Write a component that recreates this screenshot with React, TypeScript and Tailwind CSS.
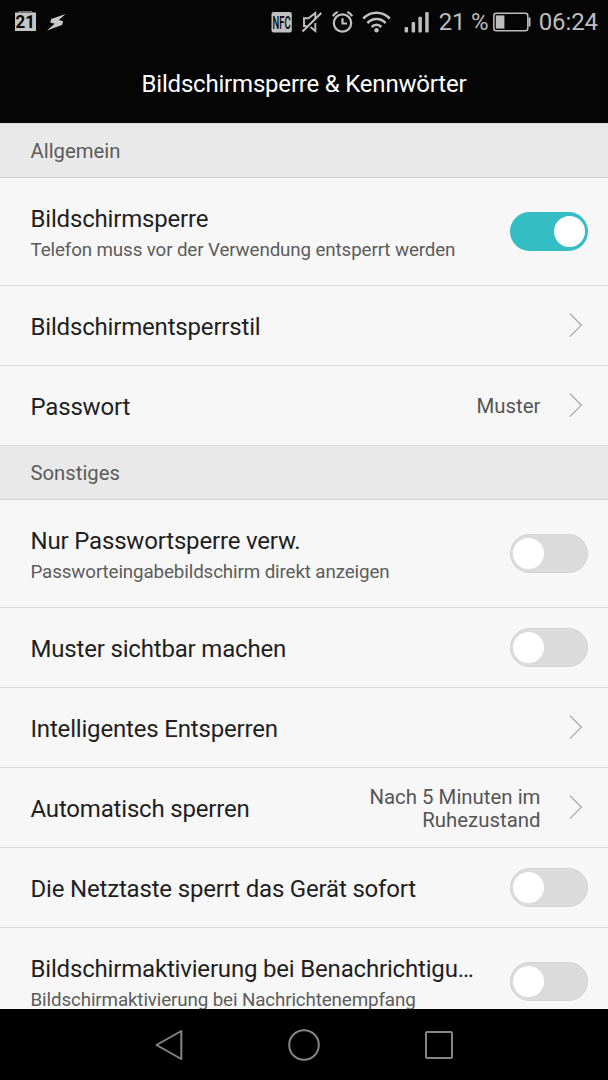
import type { ReactNode } from 'react'

interface RowProps {
  title: string
  subtitle?: string
  value?: ReactNode
  toggle?: boolean
}

function Toggle({ on }: { on: boolean }) {
  return (
    <span
      role="switch"
      aria-checked={on}
      className={
        on
          ? 'flex h-[39px] w-[78px] shrink-0 items-center justify-end rounded-full bg-[#34bec4] pr-[3px]'
          : 'flex h-[39px] w-[78px] shrink-0 items-center rounded-full border border-[#d2d2d2] bg-[#dbdbdb] pl-[2px]'
      }
    >
      <span className="size-[31px] rounded-full bg-white" />
    </span>
  )
}

function Chevron() {
  return (
    <svg width="14" height="26" viewBox="0 0 14 26" fill="none" className="mr-[5px] ml-[28.5px] shrink-0">
      <path d="M.9 .6 12.3 12.1 .9 23.6" stroke="#a3a3a3" strokeWidth="1.2" />
    </svg>
  )
}

function Section({ children }: { children: string }) {
  return (
    <h2 className="flex h-[54px] shrink-0 items-center border-b border-[#d0d0d0] bg-[#e9e9e9] pt-px pl-[30.5px] text-[20.3px] text-[#5c5c5c]">
      {children}
    </h2>
  )
}

function Row({ title, subtitle, value, toggle }: RowProps) {
  return (
    <div
      className={`flex shrink-0 items-center border-b border-[#dcdcdc] pr-[20px] pl-[30.5px] ${subtitle ? 'h-[108px]' : 'h-[80px]'}`}
    >
      <div className={`min-w-0 grow ${subtitle ? 'pt-[2px]' : 'pt-[3px]'}`}>
        <div className="text-[24px] leading-[34px] tracking-[-0.18px] whitespace-nowrap text-[#1f1f1f]">{title}</div>
        {subtitle && (
          <div className="text-[18.8px] leading-[28px] tracking-[-0.13px] whitespace-nowrap text-[#5c5c5c]">
            {subtitle}
          </div>
        )}
      </div>
      {value && (
        <div className="shrink-0 pt-[2px] text-right text-[20.4px] leading-[23px] text-[#555555]">{value}</div>
      )}
      {toggle === undefined ? <Chevron /> : <Toggle on={toggle} />}
    </div>
  )
}

function StatusBar() {
  return (
    <div className="flex h-[44px] items-center pr-[10px] pl-[15px] text-[24px] text-[#bdbdbd]">
      {/* Calendar notification */}
      <svg width="21" height="22" viewBox="0 0 21 22">
        <path d="M4 2V.7h13V2" fill="none" stroke="#8a8a8a" />
        <path d="M0 1.5h21V20H0z" fill="#c4c4c4" />
        <text x="0.6" y="17" fontSize="17.5" fontWeight="700" textLength="19.4" lengthAdjust="spacingAndGlyphs" fill="#050505">
          21
        </text>
      </svg>
      <svg width="19" height="17" viewBox="0 0 19 17" className="ml-[11px]">
        <path d="M18.6 0 4.2 5 3.2 8.4 7.6 9.8 0 16.6 15 10.9 16.2 7.3 11.8 6z" fill="#c9c9c9" />
      </svg>

      <div className="grow" />

      <svg width="21" height="21" viewBox="0 0 21 21">
        <rect x=".5" width="20.3" height="20.6" rx="2" fill="#c0c0c0" />
        <text x="1.6" y="16.8" fontSize="18.5" fontWeight="500" textLength="18" lengthAdjust="spacingAndGlyphs" fill="#050505">
          NFC
        </text>
      </svg>
      {/* Muted speaker */}
      <svg width="21" height="22" viewBox="0 0 21 22" fill="none" stroke="#c0c0c0" strokeWidth="1.9" className="ml-[9px]">
        <path d="M5.5 15H3V7.2H7.5L14.3 2v6M14.3 12v8L9.5 16" />
        <path d="M20.3 2 1.5 20.5" strokeWidth="2.1" />
      </svg>
      <svg width="21" height="22" viewBox="0 0 21 22" fill="none" stroke="#c0c0c0" strokeWidth="2.2" className="ml-[10px]">
        <circle cx="10.5" cy="12" r="8.7" />
        <path d="M10.5 7.2v5.3h4.6M.8 5.2Q2.5 2.2 5.7 1M20.2 5.2Q18.5 2.2 15.3 1" />
      </svg>
      <svg width="29" height="22" viewBox="0 0 29 22" fill="none" stroke="#c0c0c0" strokeWidth="2.6" className="ml-[9px]">
        <path d="M1.2 7.5Q7 1.7 14.5 1.7T27.8 7.5M5.4 12Q9.3 8 14.5 8t9.1 4M9.6 16q2.1-2.2 4.9-2.2t4.9 2.2" />
        <circle cx="14.5" cy="19.3" r="2.2" fill="#c0c0c0" stroke="none" />
      </svg>
      <svg width="25" height="21" viewBox="0 0 25 21" fill="#bdbdbd" className="ml-[13px]">
        <rect x=".6" y="15" width="3.5" height="5.5" rx="1" />
        <rect x="7.6" y="10" width="3.5" height="10.5" rx="1" />
        <rect x="14.4" y="4.7" width="3.5" height="15.8" rx="1" />
        <rect x="21.2" width="3.5" height="20.5" rx="1" />
      </svg>
      <span className="ml-[10px] w-[54px] tracking-[-0.2px] whitespace-nowrap">21 %</span>
      <svg width="38" height="20" viewBox="0 0 38 20" fill="none">
        <rect x=".8" y="1.3" width="34" height="17.4" rx="2.5" stroke="#bdbdbd" strokeWidth="1.5" />
        <path d="M2.8 3.4h8.6v13.2H2.8z" fill="#bdbdbd" />
        <path d="M36.5 5.5v9" stroke="#bdbdbd" strokeWidth="2" />
      </svg>
      <span className="ml-[8px] tracking-[-0.1px]">06:24</span>
    </div>
  )
}

export default function App() {
  return (
    <div className="flex h-[1080px] w-[608px] flex-col overflow-hidden bg-[#f7f7f7] font-['Roboto',sans-serif]">
      <header className="h-[123px] shrink-0 bg-[#050505]">
        <StatusBar />
        <h1 className="text-center text-[24px] leading-[80px] tracking-[-0.2px] text-white">
          Bildschirmsperre &amp; Kennwörter
        </h1>
      </header>

      <main className="flex min-h-0 grow flex-col overflow-hidden border-t border-[#dcdcdc]">
        <Section>Allgemein</Section>
        <Row title="Bildschirmsperre" subtitle="Telefon muss vor der Verwendung entsperrt werden" toggle={true} />
        <Row title="Bildschirmentsperrstil" />
        <Row title="Passwort" value="Muster" />
        <Section>Sonstiges</Section>
        <Row title="Nur Passwortsperre verw." subtitle="Passworteingabebildschirm direkt anzeigen" toggle={false} />
        <Row title="Muster sichtbar machen" toggle={false} />
        <Row title="Intelligentes Entsperren" />
        <Row
          title="Automatisch sperren"
          value={
            <>
              Nach 5 Minuten im
              <br />
              Ruhezustand
            </>
          }
        />
        <Row title="Die Netztaste sperrt das Gerät sofort" toggle={false} />
        <Row
          title="Bildschirmaktivierung bei Benachrichtigu…"
          subtitle="Bildschirmaktivierung bei Nachrichtenempfang"
          toggle={false}
        />
      </main>

      {/* Navigation keys */}
      <nav className="flex h-[71px] shrink-0 items-center justify-center gap-[103px] bg-black">
        <svg width="32" height="32" viewBox="0 0 32 32" fill="none" stroke="#858585" strokeWidth="2">
          <path d="M28.3 2v28L3.5 16z" strokeLinejoin="round" />
        </svg>
        <svg width="32" height="32" viewBox="0 0 32 32" fill="none" stroke="#858585" strokeWidth="2">
          <circle cx="16" cy="16" r="14.8" />
        </svg>
        <svg width="32" height="32" viewBox="0 0 32 32" fill="none" stroke="#858585" strokeWidth="2">
          <rect x="3" y="3" width="26" height="26" rx="1" />
        </svg>
      </nav>
    </div>
  )
}
